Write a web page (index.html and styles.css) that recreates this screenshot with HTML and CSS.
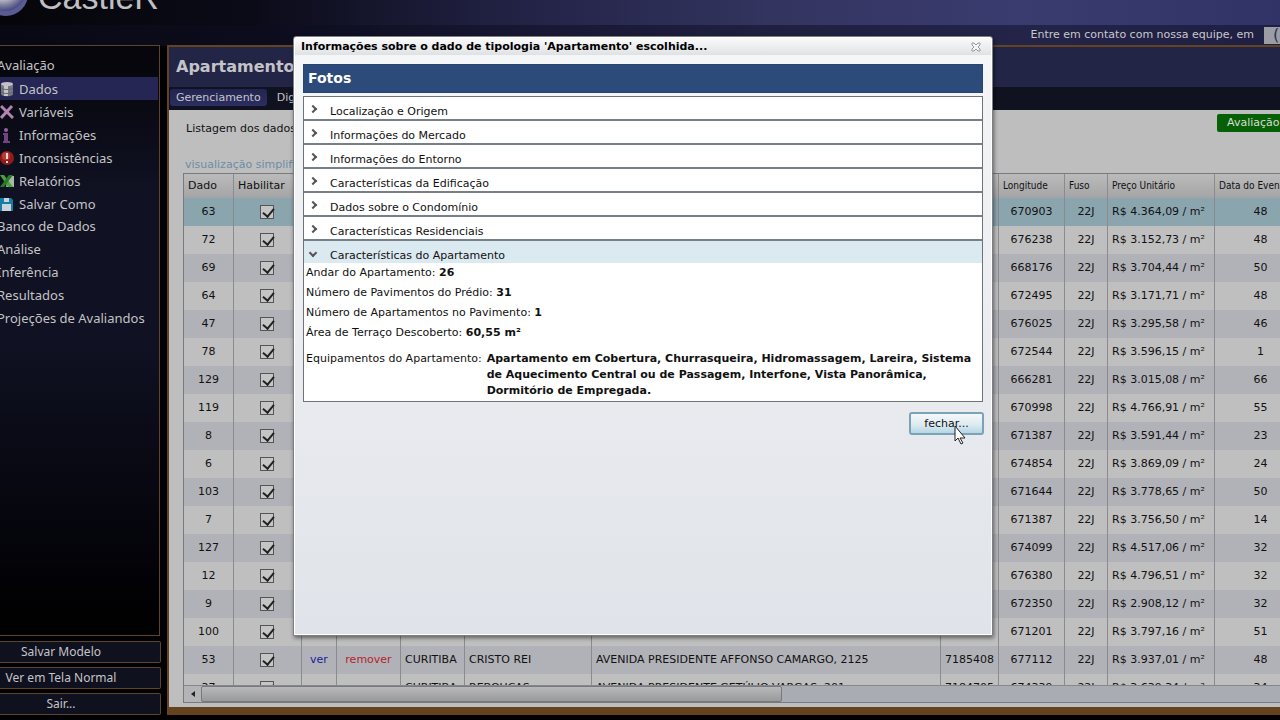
FILE: index.html
```html
<!DOCTYPE html>
<html lang="pt-BR">
<head>
<meta charset="utf-8">
<title>CastleR</title>
<link rel="stylesheet" href="styles.css">
</head>
<body>
<div class="app">
  <header class="topbar">
    <div class="brand">
      <svg class="logo" width="32" height="32" viewBox="0 0 32 32" aria-hidden="true"><defs><radialGradient id="orb" cx="0.45" cy="0.4" r="0.6"><stop offset="0.5" stop-color="#c6c6cc"/><stop offset="0.8" stop-color="#77779b"/><stop offset="1" stop-color="#4a4a80"/></radialGradient></defs><ellipse cx="6" cy="10" rx="22" ry="22" fill="#5a5a94"/><ellipse cx="5" cy="6" rx="21" ry="21" fill="url(#orb)"/></svg>
      <span>CastleR</span>
    </div>
    <div class="contact"><span>Entre em contato com nossa equipe, em</span><span class="phone">(41)</span></div>
  </header>
  <div class="body">
    <aside class="side">
      <nav class="menu">
        <a href="#">Avaliação</a>
        <a href="#" class="sub on"><svg viewBox="0 0 14 16"><path d="M1 3v10c0 3 12 3 12 0V3z" fill="#77797f"/><path d="M4 3v12h4V3z" fill="#c6c6ca"/><ellipse cx="7" cy="3" rx="6" ry="2" fill="#c2c2c6"/><path d="M1 7c2 2 10 2 12 0M1 11c2 2 10 2 12 0" fill="none" stroke="#66686e"/></svg>Dados</a>
        <a href="#" class="sub"><svg viewBox="0 0 14 16"><path d="M1 2l12 12M12 2L1 14" stroke="#b383b0" stroke-width="3"/></svg>Variáveis</a>
        <a href="#" class="sub"><svg viewBox="0 0 14 16"><circle cx="6" cy="3" r="2" fill="#9362a0"/><path d="M3 6h5v8h2v2H3v-2h1V8H3z" fill="#744281"/></svg>Informações</a>
        <a href="#" class="sub"><svg viewBox="0 0 14 16"><circle cx="7" cy="8" r="7" fill="#8f1c1c"/><circle cx="6" cy="6" r="4" fill="#b93a32"/><path d="M6 3h2v6H6zM6 11h2v2H6z" fill="#e1dada"/></svg>Inconsistências</a>
        <a href="#" class="sub"><svg viewBox="0 0 14 16"><path d="M8 3h6v11H6z" fill="#a8b8a5"/><path d="M0 2h4l9 12H8z" fill="#48a23d"/><path d="M9 2h4L4 14H0z" fill="#297a2b"/></svg>Relatórios</a>
        <a href="#" class="sub"><svg viewBox="0 0 14 16"><path d="M0 2h11l2 2v11H0z" fill="#187ba6"/><path d="M4 2h5v4H4zM2 8h9v7H2z" fill="#c9d4db"/></svg>Salvar Como</a>
        <a href="#">Banco de Dados</a>
        <a href="#">Análise</a>
        <a href="#">Inferência</a>
        <a href="#">Resultados</a>
        <a href="#">Projeções de Avaliandos</a>
      </nav>
      <button class="sidebtn">Salvar Modelo</button>
      <button class="sidebtn">Ver em Tela Normal</button>
      <button class="sidebtn">Sair...</button>
    </aside>
    <main class="panel">
      <h1>Apartamento</h1>
      <div class="tabs"><button class="tab on">Gerenciamento</button><button class="tab">Digitação</button></div>
      <section class="sheet">
        <div class="intro"><p>Listagem dos dados</p><button class="green">Avaliação</button></div>
        <a class="simple" href="#">visualização simplificada</a>
        <div class="grid">
          <div class="clip">
            <table>
              <colgroup><col class="w50"><col class="w68"><col class="w35"><col class="w64"><col class="w64"><col class="w127"><col class="w349"><col class="w58"><col class="w66"><col class="w43"><col class="w107"><col class="w92"></colgroup>
              <thead><tr><th class="big">Dado</th><th class="big">Habilitar</th><th></th><th></th><th>Cidade</th><th>Bairro</th><th>Endereço</th><th>Latitude</th><th>Longitude</th><th>Fuso</th><th>Preço Unitário</th><th>Data do Evento</th></tr></thead>
              <tbody id="rows"></tbody>
            </table>
          </div>
          <div class="hbar"><button class="arrow" aria-label="Rolar para a esquerda"><svg width="4" height="6" viewBox="0 0 4 6"><path d="M4 0v6L0 3z" fill="#222"/></svg></button><div class="thumb"></div></div>
        </div>
      </section>
    </main>
  </div>
  <section class="dialog" role="dialog" aria-labelledby="dlg">
    <div class="dtitle"><h2 id="dlg">Informações sobre o dado de tipologia 'Apartamento' escolhida...</h2><button class="close" aria-label="Fechar"><svg width="10" height="10" viewBox="0 0 10 10"><path d="M1 1h2l2 2 2-2h2v2L7 5l2 2v2H7L5 7 3 9H1V7l2-2-2-2z" fill="#f4f4f4" stroke="#999"/></svg></button></div>
    <div class="dbody">
      <h3>Fotos</h3>
      <div class="acc">
        <button><i></i>Localização e Origem</button>
        <button><i></i>Informações do Mercado</button>
        <button><i></i>Informações do Entorno</button>
        <button><i></i>Características da Edificação</button>
        <button><i></i>Dados sobre o Condomínio</button>
        <button><i></i>Características Residenciais</button>
        <button class="open" aria-expanded="true"><i></i>Características do Apartamento</button>
        <div class="details">
          <p>Andar do Apartamento: <b>26</b></p>
          <p>Número de Pavimentos do Prédio: <b>31</b></p>
          <p>Número de Apartamentos no Pavimento: <b>1</b></p>
          <p>Área de Terraço Descoberto: <b>60,55 m²</b></p>
          <div class="equip"><span>Equipamentos do Apartamento:</span><b>Apartamento em Cobertura, Churrasqueira, Hidromassagem, Lareira, Sistema de Aquecimento Central ou de Passagem, Interfone, Vista Panorâmica, Dormitório de Empregada.</b></div>
        </div>
      </div>
      <div class="foot"><button class="fechar">fechar...<svg class="cursor" width="12" height="20" viewBox="0 0 12 20"><path d="M1 1v15l3-3 3 6 2-1-3-5h5z" fill="#fff" stroke="#222"/></svg></button></div>
    </div>
  </section>
</div>
<script src="rows.js"></script>
</body>
</html>
```
FILE: styles.css
```css
* { box-sizing: border-box; }
body { margin: 0; background: #000; color: #111; font: 11px/16px "DejaVu Sans", Verdana, sans-serif; }
h1, h2, h3, p { margin: 0; }
button { font: inherit; color: inherit; padding: 0; border: 0; background: none; }
a { color: inherit; text-decoration: none; }
.app { position: relative; height: 100vh; min-height: 480px; overflow: hidden; display: flex; flex-direction: column; background: #020205; }
.topbar { flex: 0 0 46px; display: flex; justify-content: space-between; overflow: hidden; background: linear-gradient(to bottom, transparent 0 25px, rgba(12,12,32,.5) 25px), linear-gradient(to right, #050509 0, #0b0b18 20%, #242449 42%, #33345f 60%, #3a3c70 80%, #313265 100%); }
.brand { display: flex; gap: 6px; font: 34px/34px "Liberation Sans", sans-serif; color: #c0c0c4; margin-top: -20px; }
.logo { margin-top: 4px; }
.contact { display: flex; align-items: flex-start; gap: 10px; padding-top: 27px; color: #c8c8cc; }
.phone { width: 16px; height: 17px; overflow: hidden; background: #9b9ca4; color: #1f3552; font-size: 16px; padding-left: 9px; }
.body { flex: 1; min-height: 0; display: flex; gap: 6px; padding-bottom: 5px; }
.side { flex: 0 0 161px; display: flex; flex-direction: column; gap: 4px; font: 13px/20px "Noto Sans", Tahoma, sans-serif; color: #c4c4c6; }
.menu { flex: 1; margin: -1px 1px 1px 0; padding: 8px 1px 0 0; border: solid #5d442f; border-width: 1px 1px 1px 0; background: linear-gradient(#05050a, #101122 25%, #101122 50%, #04040a 85%, #000); }
.menu a { display: block; height: 23px; line-height: 22px; margin-left: -3px; white-space: nowrap; }
.menu .sub { display: flex; align-items: center; gap: 5px; margin-left: 0; }
.menu .on { background: #252653; }
.menu svg { width: 14px; height: 16px; }
.sidebtn { flex: 0 0 22px; border: 1px solid #5d442f; border-left: 0; border-radius: 0 2px 2px 0; background: #10111f; padding-right: 38px; font-size: 12px; line-height: 18px; text-align: center; white-space: nowrap; }
.panel { flex: 1; min-width: 0; display: flex; flex-direction: column; border: solid #65431f; border-width: 2px 0 8px 2px; background: #11121f; margin-top: -1px; }
h1 { flex: 0 0 40px; padding-left: 7px; background: #232547; color: #c4c4c8; font-size: 16px; line-height: 39px; }
.tabs { flex: 0 0 23px; display: flex; gap: 4px; padding: 2px 0 4px 1px; color: #c4c4c8; }
.tab { padding: 0 6px; border-radius: 3px; line-height: 16px; }
.tab.on { background: linear-gradient(#232450, #2c2e60); }
.sheet { flex: 1; min-height: 0; display: flex; flex-direction: column; background: #bebebe; padding: 4px 0 4px 14px; }
.intro { display: flex; justify-content: space-between; padding-left: 3px; }
.intro p { line-height: 30px; }
.green { width: 63px; height: 18px; background: #086006; color: #d5ddd5; border-radius: 2px 0 0 2px; padding-left: 10px; overflow: hidden; text-align: left; white-space: nowrap; }
.simple { color: #6c8da6; margin-top: 12px; padding-left: 2px; line-height: 17px; }
.grid { flex: 1; min-height: 0; display: flex; flex-direction: column; border: 1px solid #777a80; border-right: 0; }
.clip { flex: 1; min-height: 0; overflow: hidden; }
table { border-collapse: separate; border-spacing: 0; table-layout: fixed; width: 1123px; }
.w50 { width: 50px; } .w68 { width: 68px; } .w35 { width: 35px; } .w64 { width: 64px; } .w127 { width: 127px; } .w349 { width: 349px; } .w58 { width: 58px; } .w66 { width: 66px; } .w43 { width: 43px; } .w107 { width: 107px; } .w92 { width: 92px; }
th { height: 24px; padding: 0 4px; font: 10px/16px "DejaVu Sans Condensed", Tahoma, sans-serif; text-align: left; border-right: 1px solid #898b90; background: linear-gradient(#bbb, #a4a4a6); white-space: nowrap; overflow: hidden; }
th.big { font: 11px/16px "DejaVu Sans", Verdana, sans-serif; }
td { height: 28px; padding: 0 4px; border-right: 1px solid #898b90; white-space: nowrap; overflow: hidden; }
tbody tr { background: #bfbfbf; }
tbody tr:nth-child(odd) { background: #b1b2b7; }
tbody tr:first-child { background: #8ba5af; }
.c { text-align: center; }
.ver { color: #1a1aa0; } .rem { color: #b8232b; }
td input { appearance: none; display: block; width: 14px; height: 14px; margin: 0 auto; border: 1px solid #555; background: #c5c5c5; position: relative; }
td input:checked::after { content: ""; position: absolute; left: 4px; top: 0; width: 5px; height: 9px; border: solid #222; border-width: 0 2px 2px 0; transform: rotate(40deg); }
td.check { padding-right: 6px; }
td.lat { padding-right: 0; }
.hbar { flex: 0 0 17px; display: flex; border-top: 1px solid #85878b; background: #a9acb3; }
.arrow { width: 17px; display: grid; place-items: center; background: #b4b4b6; }
.thumb { width: 53%; border: 1px solid #77797d; border-radius: 2px; background: linear-gradient(#b9b9bb, #98999b); }
.dialog { position: absolute; left: 293px; right: 287px; top: 36px; height: 600px; display: flex; flex-direction: column; border: 1px solid #7c8086; border-radius: 3px 3px 0 0; box-shadow: inset 0 0 0 1px #fff, 1px 2px 4px rgba(0,0,0,.5); background: linear-gradient(#f5f6f7, #e0e3e9); }
.dtitle { height: 17px; margin: 1px; padding: 0 10px 0 6px; display: flex; align-items: center; justify-content: space-between; background: linear-gradient(#fafafa, #dfe2e4); }
h2 { font-size: 11px; line-height: 16px; color: #000; white-space: nowrap; }
.close { width: 11px; height: 11px; display: grid; place-items: center; }
.dbody { padding: 8px 9px 0; }
h3 { height: 29px; padding-left: 4px; font-size: 14px; line-height: 27px; color: #fff; background: #2d4b7a; border: 1px solid #274570; }
.acc { margin-top: 3px; border: 1px solid #6c7379; background: #fff; color: #111; }
.acc button { display: flex; width: 100%; height: 24px; padding: 6px 0 0 6px; gap: 15px; line-height: 17px; border-bottom: 2px solid #788087; text-align: left; }
.acc i { width: 6px; height: 6px; margin: 3px -1px 0 0; border: solid #555; border-width: 2px 2px 0 0; transform: rotate(45deg); flex: none; }
.acc .open { background: #dbe9f0; height: 22px; border: 0; }
.acc .open i { transform: rotate(135deg); }
.details { padding: 0 2px 2px; }
.details p { line-height: 20px; }
.equip { display: flex; gap: 5px; padding-top: 8px; }
.equip span { white-space: nowrap; }
.foot { display: flex; justify-content: flex-end; padding-top: 10px; margin-right: -1px; }
.fechar { position: relative; width: 75px; height: 23px; border: 2px solid #7ba3b8; border-radius: 3px; background: linear-gradient(#f4f8fa, #deebf1 55%, #b6d6e5); }
.cursor { position: absolute; left: 43px; top: 11px; }
```
FILE: rows.js
```js
const rows = [
  [63, 670903, "4.364,09", 48], [72, 676238, "3.152,73", 48], [69, 668176, "3.704,44", 50], [64, 672495, "3.171,71", 48],
  [47, 676025, "3.295,58", 46], [78, 672544, "3.596,15", 1], [129, 666281, "3.015,08", 66], [119, 670998, "4.766,91", 55],
  [8, 671387, "3.591,44", 23], [6, 674854, "3.869,09", 24], [103, 671644, "3.778,65", 50], [7, 671387, "3.756,50", 14],
  [127, 674099, "4.517,06", 32], [12, 676380, "4.796,51", 32], [9, 672350, "2.908,12", 32], [100, 671201, "3.797,16", 51],
  [53, 677112, "3.937,01", 48, "CRISTO REI", "AVENIDA PRESIDENTE AFFONSO CAMARGO, 2125", 7185408],
  [37, 674339, "3.639,34", 34, "REBOUÇAS", "AVENIDA PRESIDENTE GETÚLIO VARGAS, 201", 7184705]
];
document.getElementById("rows").innerHTML = rows.map(r => `<tr><td class="c">${r[0]}</td><td class="check"><input type="checkbox" aria-label="Habilitar ${r[0]}" checked></td><td class="c"><a class="ver" href="#">ver</a></td><td class="c"><a class="rem" href="#">remover</a></td><td>CURITIBA</td><td>${r[4] || ""}</td><td>${r[5] || ""}</td><td class="lat">${r[6] || ""}</td><td class="c">${r[1]}</td><td class="c">22J</td><td>R$ ${r[2]} / m²</td><td class="c">${r[3]}</td></tr>`).join("");
```
